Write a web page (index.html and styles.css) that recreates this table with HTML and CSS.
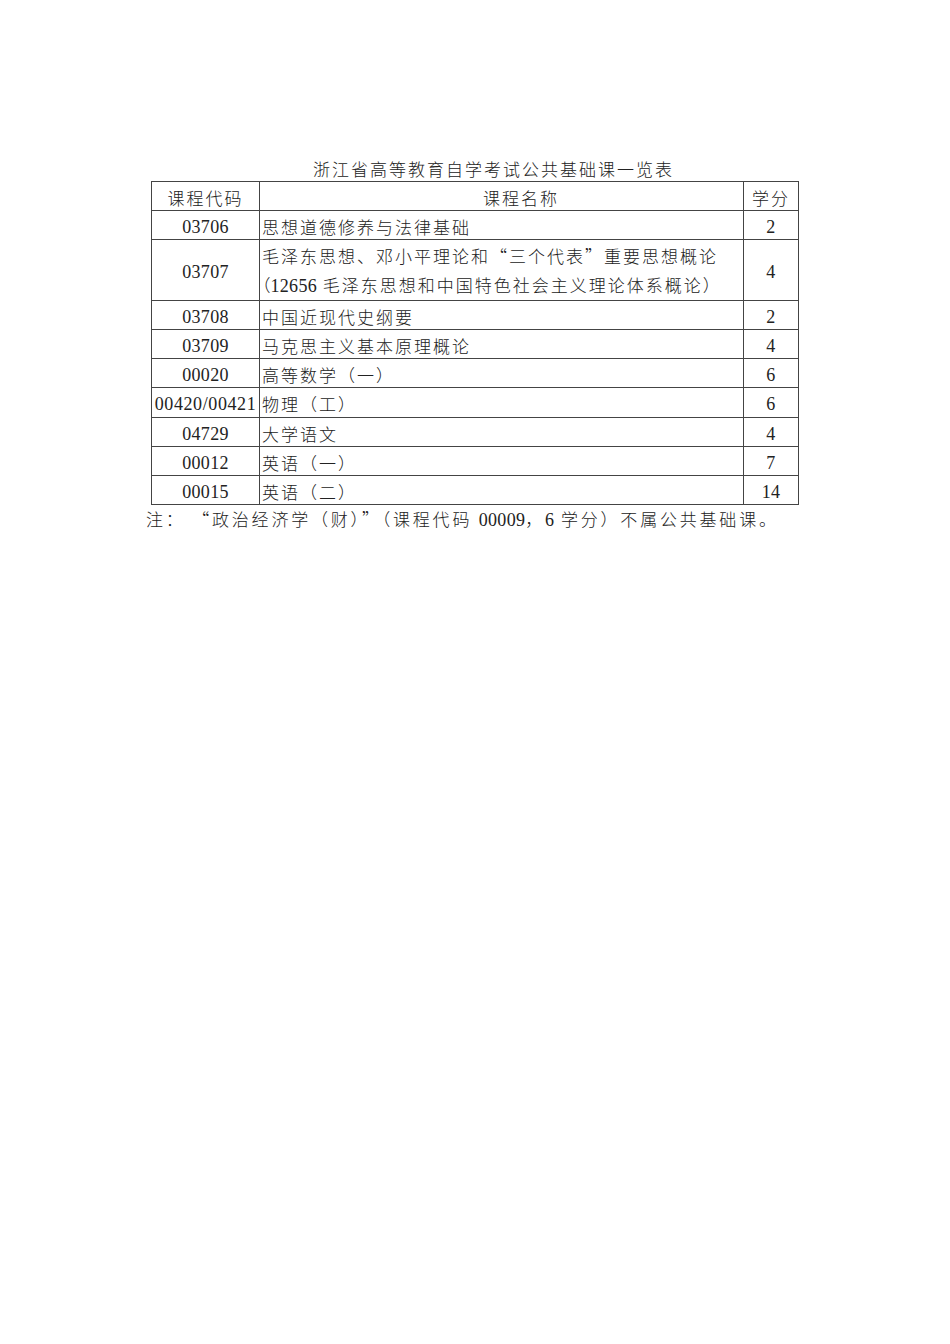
FILE: index.html
```html
<!DOCTYPE html>
<html lang="zh-CN">
<head>
<meta charset="utf-8">
<title>浙江省高等教育自学考试公共基础课一览表</title>
<link rel="stylesheet" href="styles.css">
</head>
<body>
<div class="page">
  <h1 class="title">浙江省高等教育自学考试公共基础课一览表</h1>
  <table class="courses">
    <colgroup>
      <col class="c-code">
      <col class="c-name">
      <col class="c-credit">
    </colgroup>
    <thead>
      <tr>
        <th class="code">课程代码</th>
        <th class="name-head">课程名称</th>
        <th class="credit">学分</th>
      </tr>
    </thead>
    <tbody>
      <tr><td class="code num">03706</td><td class="name">思想道德修养与法律基础</td><td class="credit num">2</td></tr>
      <tr><td class="code num">03707</td><td class="name multi">毛泽东思想、邓小平理论和<span class="q">“</span>三个代表<span class="q">”</span>重要思想概论<br><span class="half">（</span><span class="num">12656</span> 毛泽东思想和中国特色社会主义理论体系概论）</td><td class="credit num">4</td></tr>
      <tr><td class="code num">03708</td><td class="name">中国近现代史纲要</td><td class="credit num">2</td></tr>
      <tr><td class="code num">03709</td><td class="name">马克思主义基本原理概论</td><td class="credit num">4</td></tr>
      <tr><td class="code num">00020</td><td class="name">高等数学（一）</td><td class="credit num">6</td></tr>
      <tr><td class="code num wide">00420/00421</td><td class="name">物理（工）</td><td class="credit num">6</td></tr>
      <tr><td class="code num">04729</td><td class="name">大学语文</td><td class="credit num">4</td></tr>
      <tr><td class="code num">00012</td><td class="name">英语（一）</td><td class="credit num">7</td></tr>
      <tr><td class="code num">00015</td><td class="name">英语（二）</td><td class="credit num">14</td></tr>
    </tbody>
  </table>
  <p class="note">注： <span class="q">“</span>政治经济学（财）<span class="q">”</span>（课程代码 <span class="num">00009</span>，<span class="num">6</span> 学分）不属公共基础课。</p>
</div>
</body>
</html>
```

FILE: styles.css
```css
html, body {
  margin: 0;
  padding: 0;
  background: #ffffff;
}

body {
  font-family: "Noto Sans CJK SC", "Liberation Serif", sans-serif;
  font-weight: 300;
  color: #222222;
  font-size: 17px;
}

.page {
  width: 680px;
  margin-left: 146px;
  padding-top: 157px;
}

.title {
  margin: 0;
  padding-left: 167px;
  font-size: 17px;
  font-weight: 300;
  line-height: 24px;
  letter-spacing: 2px;
  white-space: nowrap;
}

.courses {
  margin-left: 5px;
  border-collapse: collapse;
  width: 647px;
  table-layout: fixed;
  border: 1px solid #444444;
}

.c-code { width: 108px; }
.c-name { width: 484px; }
.c-credit { width: 55px; }

.courses th,
.courses td {
  border: 1px solid #444444;
  padding: 4px 0 0 0;
  height: 24.1px;
  line-height: 24.1px;
  font-weight: 300;
  letter-spacing: 2px;
  vertical-align: middle;
  white-space: nowrap;
}

.code { text-align: center; }
.credit { text-align: center; }

.courses td.name {
  text-align: left;
  padding-left: 2px;
}

.courses td.multi {
  line-height: 28.5px;
  padding-top: 2px;
  padding-bottom: 0;
}

.courses th.name-head {
  text-align: left;
  padding-left: 223px;
}

.num {
  font-family: "Liberation Serif", serif;
  font-size: 18px;
  letter-spacing: 0.3px;
}

.courses td.num { letter-spacing: 0.3px; }

.courses td.wide {
  letter-spacing: 0.6px;
  overflow: visible;
}

.q {
  font-family: "Noto Sans CJK SC", sans-serif;
  font-feature-settings: "fwid" 1;
}

.half {
  font-feature-settings: "halt" 1;
  letter-spacing: 0;
}

.note {
  margin: 0;
  line-height: 28px;
  letter-spacing: 2.8px;
  white-space: nowrap;
}
```
